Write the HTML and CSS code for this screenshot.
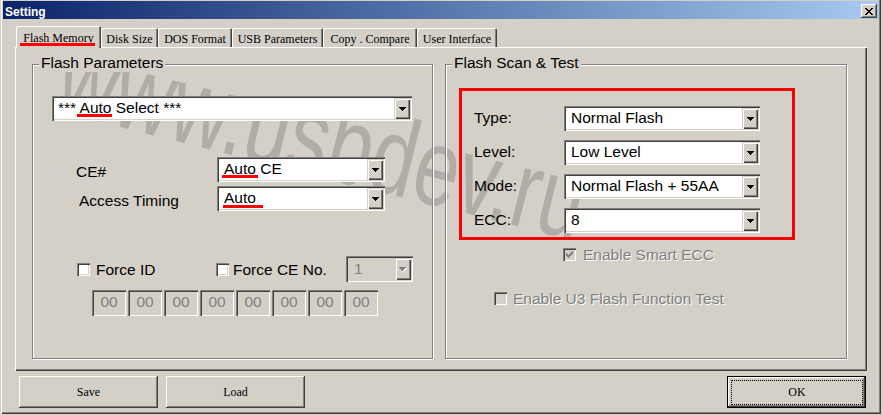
FILE: index.html
```html
<!DOCTYPE html>
<html>
<head>
<meta charset="utf-8">
<title>Setting</title>
<link rel="stylesheet" href="styles.css">
</head>
<body>
<div class="watermark">www.usbdev.ru</div>
<div class="window">
  <div class="titlebar">
    <span class="title">Setting</span>
    <span class="capbtn"><svg width="8" height="7" viewBox="0 0 8 7" shape-rendering="crispEdges"><path fill="#000" d="M0 0h2v1H0z M6 0h2v1H6z M1 1h2v1H1z M5 1h2v1H5z M2 2h4v1H2z M3 3h2v1H3z M2 4h4v1H2z M1 5h2v1H1z M5 5h2v1H5z M0 6h2v1H0z M6 6h2v1H6z"/></svg></span>
  </div>
  <div class="tabstrip">
    <div class="tab active t1"><span class="mark mark-tab">Flash Memory</span></div>
    <div class="tab t2">Disk Size</div>
    <div class="tab t3">DOS Format</div>
    <div class="tab t4">USB Parameters</div>
    <div class="tab t5">Copy . Compare</div>
    <div class="tab t6">User Interface</div>
  </div>
  <div class="tabpage">
    <div class="group g-left">
      <div class="gtitle">Flash Parameters</div>
      <div class="combo combo-main">
        <span class="val">*** <span class="mark m-main">Auto</span> Select ***</span>
        <span class="drop"><svg width="7" height="4" viewBox="0 0 7 4" shape-rendering="crispEdges"><path fill="#000" d="M0 0h7v1H0z M1 1h5v1H1z M2 2h3v1H2z M3 3h1v1H3z"/></svg></span>
      </div>
      <div class="params">
        <div class="lbl">CE#</div>
        <div class="combo">
          <span class="val"><span class="mark m-ce">Auto</span> CE</span>
          <span class="drop"><svg width="7" height="4" viewBox="0 0 7 4" shape-rendering="crispEdges"><path fill="#000" d="M0 0h7v1H0z M1 1h5v1H1z M2 2h3v1H2z M3 3h1v1H3z"/></svg></span>
        </div>
        <div class="lbl lbl-at">Access Timing</div>
        <div class="combo">
          <span class="val"><span class="mark m-at">Auto</span></span>
          <span class="drop"><svg width="7" height="4" viewBox="0 0 7 4" shape-rendering="crispEdges"><path fill="#000" d="M0 0h7v1H0z M1 1h5v1H1z M2 2h3v1H2z M3 3h1v1H3z"/></svg></span>
        </div>
      </div>
      <div class="force-row">
        <div class="chk-item force-id"><span class="chk"></span><span>Force ID</span></div>
        <div class="chk-item force-ce"><span class="chk"></span><span>Force CE No.</span></div>
        <div class="combo combo-ce">
          <span class="val">1</span>
          <span class="drop"><svg width="8" height="5" viewBox="0 0 8 5" shape-rendering="crispEdges"><path fill="#fff" d="M1 1h7v1H1z M2 2h5v1H2z M3 3h3v1H3z M4 4h1v1H4z"/><path fill="#808080" d="M0 0h7v1H0z M1 1h5v1H1z M2 2h3v1H2z M3 3h1v1H3z"/></svg></span>
        </div>
      </div>
      <div class="hex-row">
        <span class="hex">00</span><span class="hex">00</span><span class="hex">00</span><span class="hex">00</span><span class="hex">00</span><span class="hex">00</span><span class="hex">00</span><span class="hex">00</span>
      </div>
    </div>
    <div class="group g-right">
      <div class="gtitle">Flash Scan &amp; Test</div>
      <div class="redbox">
        <div class="scan-grid">
          <div class="lbl">Type:</div>
          <div class="combo">
            <span class="val">Normal Flash</span>
            <span class="drop"><svg width="7" height="4" viewBox="0 0 7 4" shape-rendering="crispEdges"><path fill="#000" d="M0 0h7v1H0z M1 1h5v1H1z M2 2h3v1H2z M3 3h1v1H3z"/></svg></span>
          </div>
          <div class="lbl">Level:</div>
          <div class="combo">
            <span class="val">Low Level</span>
            <span class="drop"><svg width="7" height="4" viewBox="0 0 7 4" shape-rendering="crispEdges"><path fill="#000" d="M0 0h7v1H0z M1 1h5v1H1z M2 2h3v1H2z M3 3h1v1H3z"/></svg></span>
          </div>
          <div class="lbl">Mode:</div>
          <div class="combo">
            <span class="val">Normal Flash + 55AA</span>
            <span class="drop"><svg width="7" height="4" viewBox="0 0 7 4" shape-rendering="crispEdges"><path fill="#000" d="M0 0h7v1H0z M1 1h5v1H1z M2 2h3v1H2z M3 3h1v1H3z"/></svg></span>
          </div>
          <div class="lbl">ECC:</div>
          <div class="combo">
            <span class="val">8</span>
            <span class="drop"><svg width="7" height="4" viewBox="0 0 7 4" shape-rendering="crispEdges"><path fill="#000" d="M0 0h7v1H0z M1 1h5v1H1z M2 2h3v1H2z M3 3h1v1H3z"/></svg></span>
          </div>
        </div>
      </div>
      <div class="chk-item smart">
        <span class="chk dis"><svg width="7" height="7" viewBox="0 0 7 7" shape-rendering="crispEdges"><path fill="#808080" d="M6 0h1v1H6z M5 1h2v1H5z M0 2h1v1H0z M4 2h3v1H4z M0 3h2v1H0z M3 3h3v1H3z M0 4h5v1H0z M1 5h3v1H1z M2 6h1v1H2z"/></svg></span>
        <span class="dtext">Enable Smart ECC</span>
      </div>
      <div class="chk-item u3">
        <span class="chk dis"></span>
        <span class="dtext">Enable U3 Flash Function Test</span>
      </div>
    </div>
  </div>
  <div class="btnrow">
    <button class="btn">Save</button>
    <button class="btn load">Load</button>
    <button class="btn ok"><span class="focus">OK</span></button>
  </div>
</div>
</body>
</html>
```
FILE: styles.css
```css
* { box-sizing: border-box; }
html, body { margin: 0; padding: 0; }
body {
  background: #d4d0c8;
  width: 883px;
  height: 415px;
  overflow: hidden;
  font-family: "Liberation Sans", Arial, sans-serif;
  font-size: 15.5px;
  color: #000;
}

.watermark {
  position: absolute;
  z-index: -1;
  left: 75px;
  top: 20px;
  font-family: "Liberation Sans", Arial, sans-serif;
  font-size: 110px;
  line-height: 1;
  color: #b0aca6;
  white-space: nowrap;
  transform-origin: 0 0;
  transform: rotate(14deg) scaleX(0.73);
}

.window {
  width: 881px;
  height: 414px;
  padding: 1px 2px 0 3px;
  box-shadow: inset 1px 0 #d4d0c8, inset 2px 0 #fff, inset -1px -1px #404040, inset -2px -2px #808080;
}

/* title bar */
.titlebar {
  height: 18px;
  display: flex;
  align-items: flex-start;
  justify-content: space-between;
  padding: 0 2px;
  background: linear-gradient(to right, #0a246a, #a6caf0);
}
.title {
  margin-top: 4px;
  line-height: 14px;
  font-size: 12px;
  font-weight: bold;
  color: #fff;
}
.capbtn {
  margin-top: 3px;
  width: 16px;
  height: 14px;
  padding-top: 1px;
  background: #d4d0c8;
  display: flex;
  align-items: center;
  justify-content: center;
  box-shadow: inset -1px -1px #404040, inset 1px 1px #fff, inset -2px -2px #808080;
}
.capbtn svg { display: block; }

/* tabs */
.tabstrip {
  height: 28px;
  display: flex;
  align-items: flex-end;
  padding-left: 13px;
}
.tab {
  height: 19px;
  padding-top: 5px;
  line-height: 12px;
  font-family: "Liberation Serif", "Times New Roman", serif;
  font-size: 12px;
  text-align: center;
  white-space: nowrap;
  border-radius: 2px 2px 0 0;
  box-shadow: inset 1px 1px #fff, inset -1px 0 #404040, inset -2px 0 #808080;
}
.tab.active {
  position: relative;
  z-index: 1;
  height: 22px;
  margin-bottom: -1px;
  padding-top: 5.5px;
  background: #d4d0c8;
}
.t1 { width: 85px; }
.t2 { width: 57px; }
.t3 { width: 74px; }
.t4 { width: 91px; }
.t5 { width: 94px; }
.t6 { width: 80px; }

/* red annotation underlines */
.mark { position: relative; }
.mark::after {
  content: "";
  position: absolute;
  height: 3px;
  background: #f00;
}
.mark-tab::after { left: -3px; right: -1px; bottom: -1px; height: 2.5px; }
.m-main::after { left: -3px; right: -1px; bottom: -1px; }
.m-ce::after { left: -2px; right: -2px; bottom: -1px; }
.m-at::after { left: -1px; right: -7px; bottom: -2px; height: 3.5px; }

/* tab page */
.tabpage {
  margin-left: 12px;
  width: 852px;
  height: 324px;
  padding: 17px 0 0 17px;
  display: flex;
  align-items: flex-start;
  box-shadow: inset 1px 1px #fff, inset -1px -1px #404040, inset -2px -2px #808080;
}
.group {
  height: 295px;
  border: 1px solid #808080;
  box-shadow: inset 1px 1px #fff, 1px 1px #fff;
}
.g-left { width: 401px; }
.g-right { width: 402px; margin-left: 12px; }
.gtitle {
  width: fit-content;
  margin: -11px 0 0 6px;
  padding: 0 2px;
  line-height: 18px;
  background: #d4d0c8;
}

/* combo boxes */
.combo {
  display: flex;
  height: 25px;
  padding: 2px;
  background: #fff;
  box-shadow: inset 1px 1px #808080, inset 2px 2px #404040, inset -1px -1px #fff, inset -2px -2px #d4d0c8;
}
.val {
  flex: 1;
  padding-left: 5px;
  line-height: 19px;
  white-space: nowrap;
}
.drop {
  width: 16px;
  display: flex;
  align-items: center;
  justify-content: center;
  padding-top: 1px;
  background: #d4d0c8;
  box-shadow: inset 1px 1px #d4d0c8, inset 2px 2px #fff, inset -1px -1px #404040, inset -2px -2px #808080;
}
.drop svg { display: block; }
.combo-main { width: 360px; margin: 24px 0 0 19px; }
.combo-main .val { padding-left: 4px; }

.params {
  display: grid;
  grid-template-columns: 141px 168px;
  row-gap: 4px;
  align-items: start;
  margin: 36px 0 0 43px;
}
.lbl { line-height: 19px; white-space: nowrap; }
.params .lbl { padding-top: 5px; }
.lbl-at { padding-left: 3px; }

/* check boxes */
.chk-item {
  display: flex;
  align-items: center;
  line-height: 19px;
  white-space: nowrap;
}
.chk {
  width: 13px;
  height: 13px;
  flex: none;
  padding: 3px;
  background: #fff;
  box-shadow: inset 1px 1px #808080, inset 2px 2px #404040, inset -1px -1px #fff, inset -2px -2px #d4d0c8;
}
.chk.dis { background: #d4d0c8; }
.chk svg { display: block; }
.dtext { color: #808080; text-shadow: 1px 1px #fff; }

.force-row {
  display: flex;
  align-items: center;
  margin: 45px 0 0 44px;
}
.force-id { width: 139px; gap: 6px; }
.force-ce { width: 130px; gap: 4px; }
.combo-ce { width: 67px; height: 26px; background: #d4d0c8; }
.combo-ce .val { color: #808080; padding-left: 6px; line-height: 21px; }

.hex-row {
  display: flex;
  gap: 2px;
  margin: 8px 0 0 59px;
}
.hex {
  width: 34px;
  height: 26px;
  text-align: center;
  line-height: 23px;
  color: #808080;
  box-shadow: inset 1px 1px #808080, inset 2px 2px #404040, inset -1px -1px #fff, inset -2px -2px #d4d0c8;
}

/* right group */
.redbox {
  width: 336px;
  margin: 16px 0 0 13px;
  border: 3px solid #f00;
  padding: 15px 0 4px 12px;
}
.scan-grid {
  display: grid;
  grid-template-columns: 90px 196px;
  row-gap: 9px;
  align-items: start;
}
.scan-grid .lbl { padding-top: 2px; }
.scan-grid .val { padding-left: 5px; }

.smart { margin: 5px 0 0 117px; gap: 7px; }
.u3 { margin: 25px 0 0 48px; gap: 6px; }

/* buttons */
.btnrow {
  display: flex;
  margin-top: 5px;
  padding: 0 13px 0 16px;
}
.btn {
  width: 139px;
  height: 32px;
  padding: 0;
  border: 0;
  background: #d4d0c8;
  color: #000;
  font-family: "Liberation Serif", "Times New Roman", serif;
  font-size: 12px;
  box-shadow: inset -1px -1px #404040, inset 1px 1px #fff, inset -2px -2px #808080;
}
.load { margin-left: 8px; }
.ok {
  margin-left: auto;
  padding: 4px 3px 3px 4px;
  box-shadow: inset 0 0 0 1px #000, inset -2px -2px #404040, inset 2px 2px #fff, inset -3px -3px #808080;
}
.focus {
  display: flex;
  align-items: center;
  justify-content: center;
  height: 100%;
  border: 1px dotted #000;
}
```
